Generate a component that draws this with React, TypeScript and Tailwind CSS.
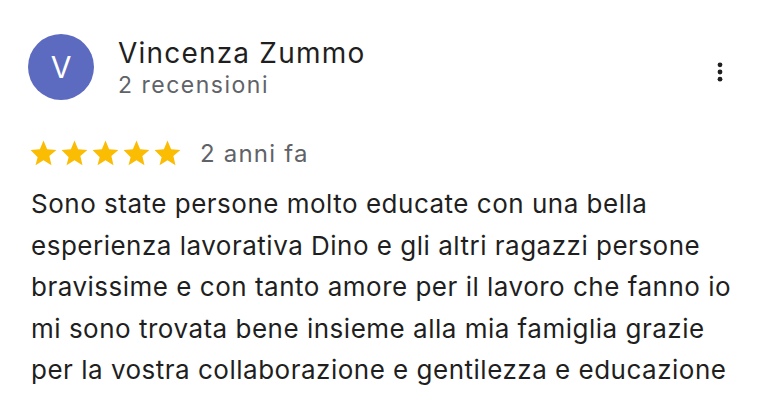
import React from "react";

const STAR = "M12 17.27L18.18 21l-1.64-7.03L22 9.24l-7.19-.61L12 2 9.19 8.63 2 9.24l5.46 5.73L5.82 21z";

function Star() {
  return (
    <svg viewBox="0 0 24 24" className="w-[31px] h-[31px] shrink-0" fill="#fbbc04">
      <path d={STAR} />
    </svg>
  );
}

export default function App() {
  return (
    <div
      className="w-[766px] h-[402px] bg-white overflow-hidden pl-[28px] pt-[34px] text-[#1f1f1f]"
      style={{ fontFamily: "Inter, Roboto, sans-serif" }}
    >
      {/* Header */}
      <div className="flex items-start pr-[34px]">
        <div className="w-[66px] h-[66px] rounded-full bg-[#5c6bc0] flex items-center justify-center text-white text-[30px] shrink-0">
          V
        </div>
        <div className="ml-[24px] pt-[4px]">
          <div className="text-[28px] leading-[30px] tracking-[1.2px]">Vincenza Zummo</div>
          <div className="text-[23px] leading-[30px] tracking-[1.5px] text-[#5f6368] mt-[2px]">2 recensioni</div>
        </div>
        <svg viewBox="0 0 24 24" className="ml-auto mt-[26px] w-[24px] h-[24px]" fill="#1f1f1f">
          <circle cx="12" cy="4.8" r="2.4" />
          <circle cx="12" cy="12" r="2.4" />
          <circle cx="12" cy="19.2" r="2.4" />
        </svg>
      </div>

      {/* Rating */}
      <div className="flex items-center mt-[38px] h-[31px]">
        <Star />
        <Star />
        <Star />
        <Star />
        <Star />
        <span className="ml-[17px] text-[24px] leading-[31px] tracking-[1.2px] text-[#5f6368]">2 anni fa</span>
      </div>

      {/* Review */}
      <p className="mt-[14px] pl-[3px] pr-[24px] text-[26px] leading-[41.5px] tracking-[0.5px]">
        Sono state persone molto educate con una bella esperienza lavorativa Dino e gli altri ragazzi
        persone bravissime e con tanto amore per il lavoro che fanno io mi sono trovata bene insieme
        alla mia famiglia grazie per la vostra collaborazione e gentilezza e educazione
      </p>
    </div>
  );
}
